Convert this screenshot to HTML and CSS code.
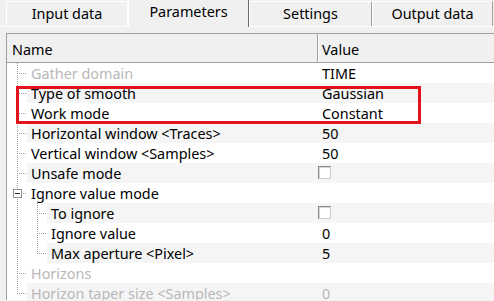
FILE: index.html
```html
<!DOCTYPE html>
<html lang="en">
<head>
  <meta charset="UTF-8">
  <title>Parameters</title>
  <link rel="stylesheet" href="styles.css">
</head>
<body>

  <!-- Tab strip -->
  <div class="tabs">
    <div class="tab tab-input">Input data</div>
    <div class="tab tab-params active">Parameters</div>
    <div class="tab tab-settings">Settings</div>
    <div class="tab tab-output">Output data</div>
  </div>

  <!-- Property grid -->
  <div class="grid">
    <div class="head">
      <div class="hcell hname">Name</div>
      <div class="hcell hvalue">Value</div>
    </div>

    <div class="rows">
      <div class="row">
        <div class="guides"><span class="g tee"></span></div>
        <div class="name disabled">Gather domain</div>
        <div class="value">TIME</div>
      </div>
      <div class="row">
        <div class="guides"><span class="g tee"></span></div>
        <div class="name">Type of smooth</div>
        <div class="value">Gaussian</div>
      </div>
      <div class="row">
        <div class="guides"><span class="g tee"></span></div>
        <div class="name">Work mode</div>
        <div class="value">Constant</div>
      </div>
      <div class="row">
        <div class="guides"><span class="g tee"></span></div>
        <div class="name">Horizontal window &lt;Traces&gt;</div>
        <div class="value">50</div>
      </div>
      <div class="row">
        <div class="guides"><span class="g tee"></span></div>
        <div class="name">Vertical window &lt;Samples&gt;</div>
        <div class="value">50</div>
      </div>
      <div class="row">
        <div class="guides"><span class="g tee"></span></div>
        <div class="name">Unsafe mode</div>
        <div class="value"><span class="check"></span></div>
      </div>
      <div class="row">
        <div class="guides"><span class="g open"><i class="box"></i></span></div>
        <div class="name">Ignore value mode</div>
        <div class="value"></div>
      </div>
      <div class="row">
        <div class="guides"><span class="g pipe"></span><span class="g tee"></span></div>
        <div class="name">To ignore</div>
        <div class="value"><span class="check"></span></div>
      </div>
      <div class="row">
        <div class="guides"><span class="g pipe"></span><span class="g tee"></span></div>
        <div class="name">Ignore value</div>
        <div class="value">0</div>
      </div>
      <div class="row">
        <div class="guides"><span class="g pipe"></span><span class="g end"></span></div>
        <div class="name">Max aperture &lt;Pixel&gt;</div>
        <div class="value">5</div>
      </div>
      <div class="row">
        <div class="guides"><span class="g tee"></span></div>
        <div class="name disabled">Horizons</div>
        <div class="value"></div>
      </div>
      <div class="row">
        <div class="guides"><span class="g end"></span></div>
        <div class="name disabled">Horizon taper size &lt;Samples&gt;</div>
        <div class="value disabled">0</div>
      </div>

      <!-- highlight annotation -->
      <div class="mark"></div>
    </div>
  </div>

</body>
</html>
```

FILE: styles.css
```css
* {
  box-sizing: border-box;
}
body {
  margin: 0;
  width: 494px;
  height: 301px;
  overflow: hidden;
  background: #f0f0f0;
  font-family: 'Noto Sans', sans-serif;
  font-size: 14.4px;
  color: #000;
}

/* Tabs */
.tabs {
  display: flex;
  align-items: flex-end;
  height: 27px;
  padding-left: 6px;
  border-bottom: 1px solid #fff;
}
.tab {
  height: 25px;
  line-height: 24px;
  text-align: center;
  background: #f0f0f0;
  border-top: 1px solid #fff;
  border-left: 1px solid #fff;
  border-right: 1px solid #a0a0a0;
}
.tab.active {
  height: 28px;
  line-height: 24px;
  margin-bottom: -1px;
  border-right: 1px solid #696969;
  position: relative;
}
.tab-input { width: 122px; border-right-color: #fff; }
.tab-params { width: 121px; }
.tab-settings { width: 123px; }
.tab-output { width: 121px; }

/* Grid */
.grid {
  margin: 6px 0 0 6px;
  background: #fff;
  border-top: 1px solid #a0a0a0;
  border-left: 1px solid #a0a0a0;
  height: 267px;
  overflow: hidden;
}
.head {
  display: flex;
  height: 29px;
  background: #f0f0f0;
  border-bottom: 1px solid #a0a0a0;
}
.hcell {
  line-height: 32px;
}
.hname {
  width: 311px;
  padding-left: 5px;
  border-right: 1px solid #a0a0a0;
}
.hvalue {
  flex: 1;
  padding-left: 3px;
  border-left: 1px solid #fff;
}

.rows {
  position: relative;
}
.row {
  display: flex;
  height: 20px;
  line-height: 21px;
}
.row:nth-child(even) .name,
.row:nth-child(even) .value {
  background: #f5f5f5;
}
.guides {
  display: flex;
}
.name {
  flex: 1;
  padding-left: 4px;
  white-space: nowrap;
}
.value {
  width: 177px;
  padding-left: 5px;
}
.disabled {
  color: #b8b8b8;
}

/* tree guide lines */
.g {
  position: relative;
  width: 20px;
  height: 20px;
}
.g::before,
.g::after {
  content: "";
  position: absolute;
}
.g::before {
  left: 10px;
  top: 0;
  width: 1px;
  height: 20px;
  background: repeating-linear-gradient(to bottom, #a0a0a0 0 1px, transparent 1px 2px);
}
.g::after {
  left: 11px;
  top: 10px;
  width: 9px;
  height: 1px;
  background: repeating-linear-gradient(to right, transparent 0 1px, #a0a0a0 1px 2px);
}
.pipe::after {
  display: none;
}
.end::before {
  height: 11px;
}
.open::after {
  left: 15px;
  width: 5px;
}
.box {
  position: absolute;
  left: 6px;
  top: 6px;
  width: 9px;
  height: 9px;
  background: #fff;
  border: 1px solid #919191;
  z-index: 1;
}
.box::after {
  content: "";
  position: absolute;
  left: 1px;
  top: 3px;
  width: 5px;
  height: 1px;
  background: #2b2b2b;
}

/* checkbox */
.check {
  display: inline-block;
  vertical-align: top;
  margin: 3px 0 0 -4px;
  width: 13px;
  height: 13px;
  background: #fff;
  border: 1px solid #8a8a8a;
  border-right-color: #c8c8c8;
  border-bottom-color: #c8c8c8;
  box-shadow: inset 1px 1px 0 #d8d8d8;
}

/* red highlight */
.mark {
  position: absolute;
  left: 9px;
  top: 23px;
  width: 405px;
  height: 38px;
  border: 3px solid #e3131d;
}
```
